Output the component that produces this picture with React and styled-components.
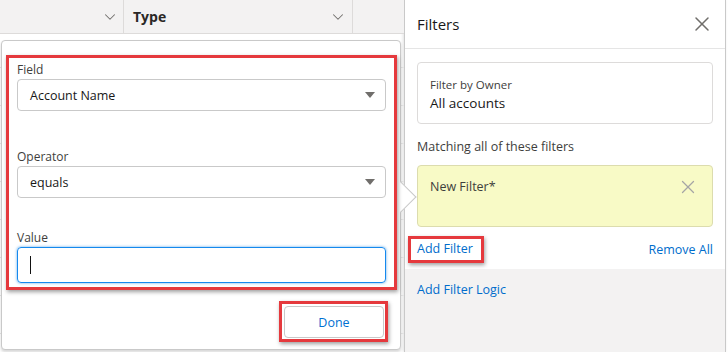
import React from 'react';
import styled, { createGlobalStyle } from 'styled-components';
import { ChevronDown, X } from 'lucide-react';

const GlobalStyle = createGlobalStyle`
    html, body {
        margin: 0;
        padding: 0;
        background: #fff;
    }
    body {
        font-family: "Open Sans", "Noto Sans", Arial, sans-serif;
        color: #3e3e3c;
    }
`;

const Page = styled.div`
    width: 728px;
    height: 352px;
    display: flex;
    overflow: hidden;
    background: #fff;
`;

/* ---------- list view behind the popover ---------- */

const ListArea = styled.div`
    position: relative;
    width: 404px;
    flex: none;
`;

const HeaderRow = styled.div`
    display: flex;
    height: 33px;
    background: #f3f2f2;
    border-bottom: 1px solid #dddbda;
`;

const HeadCell = styled.div`
    width: ${p => p.w}px;
    flex: none;
    display: flex;
    align-items: center;
    justify-content: space-between;
    padding: 0 ${p => p.pr || 0}px 0 ${p => p.pl || 0}px;
    box-sizing: border-box;
    border-right: ${p => p.last ? 'none' : '1px solid #dddbda'};
    font-size: 14px;
    font-weight: 700;
    color: #2b2826;
`;

const BodyRow = styled.div`
    height: ${p => p.h}px;
    border-bottom: 1px solid #e5e5e5;
`;

/* ---------- filter editing popover ---------- */

const Popover = styled.div`
    position: absolute;
    z-index: 5;
    left: 1px;
    top: 40px;
    width: 400px;
    height: 310px;
    box-sizing: border-box;
    background: #fff;
    border: 1px solid #c9c9c9;
    border-radius: 4px;
    box-shadow: 0 2px 3px rgba(0, 0, 0, 0.16);
    padding: 14px 3px 0 4px;
`;

const Nubbin = styled.div`
    position: absolute;
    z-index: 0;
    right: -12px;
    top: 145px;
    width: 21px;
    height: 21px;
    background: #fff;
    border-top: 1px solid #c9c9c9;
    border-right: 1px solid #c9c9c9;
    transform: rotate(45deg);
`;

const Highlight = styled.div`
    position: relative;
    z-index: 1;
    border: 3px solid #e5393d;
    box-shadow: 1px 2px 4px rgba(0, 0, 0, 0.38);
    padding: ${p => p.pad};
    background: #fff;
`;

const Field = styled.div`
    margin-top: ${p => p.mt || 0}px;
`;

const Label = styled.div`
    font-size: 12px;
    line-height: 18px;
    color: #3e3e3c;
`;

const Select = styled.div`
    height: 32px;
    box-sizing: border-box;
    border: 1px solid #c9c9c9;
    border-radius: 4px;
    display: flex;
    align-items: center;
    justify-content: space-between;
    padding: 0 10px 0 12px;
    font-size: 12.5px;
    color: #181818;
`;

const Caret = styled.span`
    width: 0;
    height: 0;
    border-left: 5px solid transparent;
    border-right: 5px solid transparent;
    border-top: 6px solid #706e6b;
`;

const Input = styled.div`
    height: 36px;
    box-sizing: border-box;
    border: 1px solid #1589ee;
    border-radius: 4px;
    box-shadow: 0 0 3px #5fa8e8;
    display: flex;
    align-items: center;
    padding-left: 12px;
`;

const TextCursor = styled.span`
    width: 1px;
    height: 18px;
    background: #111;
`;

const PopFooter = styled.div`
    display: flex;
    justify-content: flex-end;
    margin-top: 11px;
    padding-right: 9px;
`;

const Button = styled.button`
    width: 100px;
    height: 32px;
    box-sizing: border-box;
    border: 1px solid #c9c9c9;
    border-radius: 4px;
    background: #fff;
    color: #0070d2;
    font-family: inherit;
    font-size: 12.5px;
    display: block;
`;

/* ---------- filters side panel ---------- */

const Panel = styled.div`
    width: 322px;
    flex: none;
    box-sizing: border-box;
    border-left: 1px solid #c9c9c9;
    border-right: 1px solid #c9c9c9;
    box-shadow: -1px 0 3px rgba(0, 0, 0, 0.12);
    display: flex;
    flex-direction: column;
    background: #fff;
`;

const PanelHeader = styled.div`
    height: 48px;
    flex: none;
    border-bottom: 1px solid #e5e5e5;
    display: flex;
    align-items: center;
    justify-content: space-between;
    padding: 0 11px 0 12px;
    font-size: 15px;
    color: #181818;
`;

const PanelBody = styled.div`
    padding: 13px 12px 6px;
`;

const Card = styled.div`
    height: 62px;
    box-sizing: border-box;
    border: 1px solid ${p => p.yellow ? '#dcdcae' : '#dddbda'};
    border-radius: 4px;
    background: ${p => p.yellow ? '#f8fac6' : '#fff'};
    margin-top: ${p => p.mt || 0}px;
    padding: ${p => p.yellow ? '12px 13px 0 12px' : '14px 12px 0'};
    display: flex;
    justify-content: space-between;
    align-items: flex-start;
`;

const SmallText = styled.div`
    font-size: 11.5px;
    line-height: 16px;
    color: #3e3e3c;
`;

const ValueText = styled.div`
    font-size: 13.5px;
    line-height: 20px;
    color: #181818;
`;

const Caption = styled.div`
    font-size: 12.5px;
    line-height: 18px;
    margin-top: ${p => p.mt || 0}px;
    color: #3e3e3c;
`;

const LinkRow = styled.div`
    display: flex;
    justify-content: space-between;
    align-items: center;
    margin-top: 9px;
`;

const LinkMark = styled(Highlight)`
    margin-left: -9px;
`;

const Link = styled.a`
    font-size: 12.5px;
    line-height: 18px;
    color: #006dcc;
    text-decoration: none;
    display: block;
`;

const PanelFooter = styled.div`
    flex: 1;
    background: #f3f2f2;
    padding: 12px 12px 0;
`;

const App = () => {
    return (
        <>
            <GlobalStyle />
            <Page>
                <ListArea>
                    <HeaderRow>
                        <HeadCell w={124} pr={4}>
                            <span />
                            <ChevronDown size={18} strokeWidth={1.4} color="#706e6b" />
                        </HeadCell>
                        <HeadCell w={229} pl={9} pr={5}>
                            <span>Type</span>
                            <ChevronDown size={18} strokeWidth={1.4} color="#706e6b" />
                        </HeadCell>
                        <HeadCell w={51} last />
                    </HeaderRow>
                    <BodyRow h={33} />
                    {[0, 1, 2, 3, 4, 5, 6].map(i => <BodyRow key={i} h={37} />)}

                    <Popover>
                        <Nubbin />
                        <Highlight pad="3px 8px 4px">
                            <Field>
                                <Label>Field</Label>
                                <Select>
                                    <span>Account Name</span>
                                    <Caret />
                                </Select>
                            </Field>
                            <Field mt={37}>
                                <Label>Operator</Label>
                                <Select>
                                    <span>equals</span>
                                    <Caret />
                                </Select>
                            </Field>
                            <Field mt={31}>
                                <Label>Value</Label>
                                <Input>
                                    <TextCursor />
                                </Input>
                            </Field>
                        </Highlight>
                        <PopFooter>
                            <Highlight pad="2px 1px 1px 2px">
                                <Button>Done</Button>
                            </Highlight>
                        </PopFooter>
                    </Popover>
                </ListArea>

                <Panel>
                    <PanelHeader>
                        <span>Filters</span>
                        <X size={24} strokeWidth={1.5} color="#706e6b" />
                    </PanelHeader>
                    <PanelBody>
                        <Card>
                            <div>
                                <SmallText>Filter by Owner</SmallText>
                                <ValueText>All accounts</ValueText>
                            </div>
                        </Card>
                        <Caption mt={14}>Matching all of these filters</Caption>
                        <Card yellow mt={9}>
                            <Caption>New Filter*</Caption>
                            <X size={22} strokeWidth={1.4} color="#a5a5a5" style={{ marginTop: -2 }} />
                        </Card>
                        <LinkRow>
                            <LinkMark pad="1px 8px 2px 6px">
                                <Link>Add Filter</Link>
                            </LinkMark>
                            <Link>Remove All</Link>
                        </LinkRow>
                    </PanelBody>
                    <PanelFooter>
                        <Link>Add Filter Logic</Link>
                    </PanelFooter>
                </Panel>
            </Page>
        </>
    );
};

export default App;
